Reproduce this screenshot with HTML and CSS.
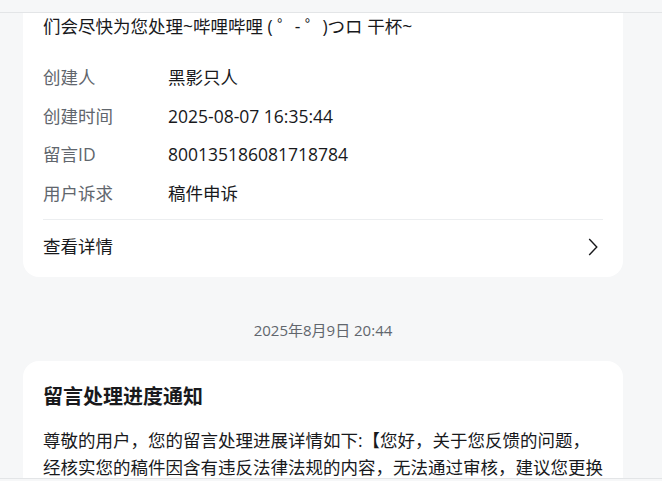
FILE: index.html
```html
<!DOCTYPE html>
<html lang="zh-CN">
<head>
<meta charset="utf-8">
<title>消息</title>
<link rel="stylesheet" href="styles.css">
</head>
<body>
<header class="topbar"></header>
<main class="feed">
  <section class="card card-cut">
    <p class="msg-text">们会尽快为您处理~哔哩哔哩 ( ゜- ゜)つロ 干杯~</p>
    <dl class="info">
      <dt>创建人</dt><dd>黑影只人</dd>
      <dt>创建时间</dt><dd>2025-08-07 16:35:44</dd>
      <dt>留言ID</dt><dd>800135186081718784</dd>
      <dt>用户诉求</dt><dd>稿件申诉</dd>
    </dl>
    <a class="detail-link" href="#">
      <span>查看详情</span>
      <svg class="chevron" width="10" height="18" viewBox="0 0 10 18" aria-hidden="true"><path d="M1.2 1 L8.8 9 L1.2 17" fill="none" stroke="#18191c" stroke-width="1.4"/></svg>
    </a>
  </section>
  <div class="time">2025年8月9日 20:44</div>
  <section class="card">
    <h2 class="card-title">留言处理进度通知</h2>
    <p class="msg-text">尊敬的用户，您的留言处理进展详情如下:【您好，关于您反馈的问题，经核实您的稿件因含有违反法律法规的内容，无法通过审核，建议您更换内容后重新投稿。】</p>
  </section>
</main>
<footer class="bottombar"></footer>
</body>
</html>
```
FILE: styles.css
```css
html, body {
  margin: 0;
  padding: 0;
}
body {
  background: #f6f7f8;
  height: 481px;
  overflow: hidden;
  font-family: "Open Sans", "Noto Sans CJK SC", sans-serif;
  color: #18191c;
}
.topbar {
  height: 12px;
  background: #f6f7f8;
  border-bottom: 1px solid #e3e5e7;
}
.feed {
  width: 600px;
  margin-left: 23px;
  display: flex;
  flex-direction: column;
}
.card {
  background: #fff;
  border-radius: 16px;
  padding: 22px 20px 20px;
}
.card-cut {
  border-radius: 0 0 16px 16px;
  padding-top: 0;
  padding-bottom: 17px;
}
.msg-text {
  margin: 0;
  font-size: 17.5px;
  line-height: 27px;
  color: #18191c;
}
.info {
  margin: 24px 0 0;
  display: grid;
  grid-template-columns: 125px 1fr;
  row-gap: 11.5px;
  font-size: 17.5px;
  line-height: 27px;
}
.info dt {
  color: #61666d;
}
.info dd {
  margin: 0;
  color: #18191c;
}
.detail-link {
  margin-top: 12.5px;
  border-top: 1px solid #eceef0;
  padding-top: 13px;
  display: flex;
  align-items: center;
  justify-content: space-between;
  font-size: 17.5px;
  line-height: 27px;
  color: #18191c;
  text-decoration: none;
}
.chevron {
  margin-right: 5px;
}
.time {
  margin: 43px 0 21px;
  text-align: center;
  font-size: 15px;
  line-height: 20px;
  color: #61666d;
}
.card-title {
  margin: 0 0 16px;
  font-size: 20px;
  line-height: 28px;
  font-weight: 700;
  color: #18191c;
}
.bottombar {
  position: fixed;
  left: 0;
  right: 0;
  bottom: 0;
  height: 2px;
  background: #f6f7f8;
  border-top: 1px solid #e3e5e7;
}
```
